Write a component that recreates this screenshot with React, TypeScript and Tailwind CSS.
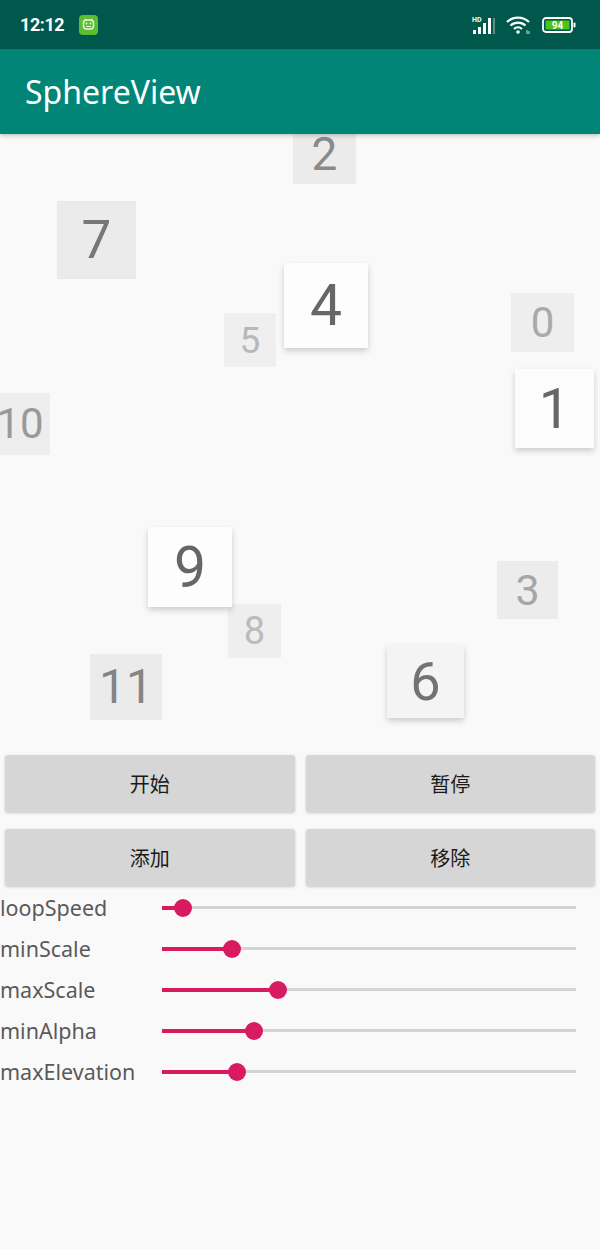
import React from "react";

// Sphere tag data (positions relative to the sphere canvas)
interface Tag {
  n: string;
  x: number;
  y: number;
  w: number;
  h: number;
  fs: number;
  color: string;
  bg: string;
  lifted?: boolean;
}

const tags: Tag[] = [
  { n: "2", x: 293, y: -10, w: 63, h: 60, fs: 46, color: "#8a8a8a", bg: "#ebebeb" },
  { n: "7", x: 57, y: 67, w: 79, h: 78, fs: 53, color: "#777777", bg: "#ebebeb" },
  { n: "5", x: 224, y: 179, w: 52, h: 54, fs: 37, color: "#b8b8b8", bg: "#efefef" },
  { n: "4", x: 284, y: 129, w: 84, h: 85, fs: 57, color: "#666666", bg: "#fdfdfd", lifted: true },
  { n: "0", x: 511, y: 159, w: 63, h: 59, fs: 42, color: "#a9a9a9", bg: "#eeeeee" },
  { n: "1", x: 515, y: 235, w: 79, h: 79, fs: 56, color: "#666666", bg: "#fcfcfc", lifted: true },
  { n: "10", x: -10, y: 259, w: 60, h: 62, fs: 42, color: "#999999", bg: "#ededed" },
  { n: "8", x: 228, y: 470, w: 53, h: 54, fs: 38, color: "#bbbbbb", bg: "#eeeeee" },
  { n: "9", x: 148, y: 393, w: 84, h: 80, fs: 57, color: "#666666", bg: "#fdfdfd", lifted: true },
  { n: "3", x: 497, y: 427, w: 61, h: 58, fs: 43, color: "#a6a6a6", bg: "#ececec" },
  { n: "11", x: 90, y: 520, w: 72, h: 66, fs: 48, color: "#858585", bg: "#ebebeb" },
  { n: "6", x: 387, y: 511, w: 77, h: 73, fs: 54, color: "#737373", bg: "#f4f4f4", lifted: true },
];

// slider rows: thumb center x measured from the track start (track is 414px wide)
const sliders = [
  { name: "loopSpeed", pos: 21 },
  { name: "minScale", pos: 70 },
  { name: "maxScale", pos: 116 },
  { name: "minAlpha", pos: 92 },
  { name: "maxElevation", pos: 75 },
];

const buttons = ["开始", "暂停", "添加", "移除"];

const StatusBar = () => (
  <div className="h-[49px] bg-[#00574b] flex items-center justify-between pl-[20px] pr-[24px]">
    <div className="flex items-center gap-[15px]">
      <span className="text-white text-[18px] font-bold font-['Roboto',sans-serif] tracking-tight">
        12:12
      </span>
      <svg width="19" height="20" viewBox="0 0 19 20">
        <rect x="0" y="0" width="19" height="20" rx="4" fill="#5cbd33" />
        <rect x="4.5" y="5" width="10" height="9" rx="3" fill="none" stroke="#e8f7dd" strokeWidth="1.4" />
        <circle cx="7.5" cy="8.5" r="0.9" fill="#e8f7dd" />
        <circle cx="11.5" cy="8.5" r="0.9" fill="#e8f7dd" />
        <path d="M7 11.5 H12" stroke="#e8f7dd" strokeWidth="1" />
        <path d="M6 3.5 L7 5 M13 3.5 L12 5" stroke="#e8f7dd" strokeWidth="1" />
      </svg>
    </div>
    <div className="flex items-center gap-[10px]">
      {/* HD signal */}
      <svg width="24" height="20" viewBox="0 0 24 20">
        <text x="0" y="7" fontSize="7" fontWeight="bold" fill="#ffffff" fontFamily="Roboto, sans-serif">
          HD
        </text>
        <rect x="1" y="15" width="3" height="4" fill="#ffffff" />
        <rect x="6" y="12" width="3" height="7" fill="#ffffff" />
        <rect x="11" y="8" width="3" height="11" fill="#ffffff" />
        <rect x="16" y="3" width="3" height="16" fill="#ffffff" />
        <rect x="21" y="3" width="2" height="16" fill="#5e8f88" />
      </svg>
      {/* wifi */}
      <svg width="26" height="20" viewBox="0 0 26 20">
        <path d="M1 7 A16 16 0 0 1 23 7" fill="none" stroke="#ffffff" strokeWidth="2.2" />
        <path d="M4.5 10.5 A11 11 0 0 1 19.5 10.5" fill="none" stroke="#ffffff" strokeWidth="2.2" />
        <path d="M8 14 A6 6 0 0 1 16 14" fill="none" stroke="#ffffff" strokeWidth="2.2" />
        <circle cx="12" cy="17" r="1.8" fill="#ffffff" />
        <path d="M21 15 v4 M23 16 v3" stroke="#cfe3df" strokeWidth="1" />
      </svg>
      {/* battery */}
      <svg width="34" height="18" viewBox="0 0 34 18">
        <rect x="1" y="2" width="29" height="14" rx="3" fill="none" stroke="#ffffff" strokeWidth="1.8" />
        <rect x="3.5" y="4.5" width="24" height="9" rx="1" fill="#4cc21a" />
        <rect x="31.5" y="6.5" width="2" height="5" rx="1" fill="#ffffff" />
        <text x="15.5" y="12.5" textAnchor="middle" fontSize="10" fontWeight="bold" fill="#ffffff" fontFamily="Roboto, sans-serif">
          94
        </text>
      </svg>
    </div>
  </div>
);

const SphereTag = ({ tag }: { tag: Tag }) => (
  <div
    className={`absolute flex items-center justify-center font-['Roboto',sans-serif] leading-none ${
      tag.lifted ? "shadow-[0_3px_6px_rgba(0,0,0,0.18)]" : ""
    }`}
    style={{
      left: tag.x,
      top: tag.y,
      width: tag.w,
      height: tag.h,
      fontSize: tag.fs,
      color: tag.color,
      background: tag.bg,
    }}
  >
    {tag.n}
  </div>
);

const Slider = ({ name, pos }: { name: string; pos: number }) => (
  <div className="h-[41px] flex items-center">
    <span className="w-[162px] text-[21.5px] text-[#5a5a5a] font-['Noto_Sans',sans-serif] leading-none">
      {name}
    </span>
    <div className="relative w-[414px] h-[18px] flex items-center">
      <div className="w-full h-[3px] bg-[#d4d4d4]" />
      <div className="absolute left-0 h-[4px] bg-[#d81b60]" style={{ width: pos }} />
      <div
        className="absolute w-[18px] h-[18px] rounded-full bg-[#d81b60]"
        style={{ left: pos - 9 }}
      />
    </div>
  </div>
);

export default function App() {
  return (
    <div className="w-[600px] min-h-[1249px] bg-[#faf9fa]">
      <StatusBar />
      <div className="h-[85px] bg-[#008577] flex items-center pl-[25px] shadow-[0_2px_4px_rgba(0,0,0,0.2)] relative z-10">
        <h1 className="text-white text-[32px] font-['Noto_Sans',sans-serif] leading-none">SphereView</h1>
      </div>
      <div className="relative h-[621px] overflow-hidden">
        {tags.map((t) => (
          <SphereTag tag={t} key={t.n} />
        ))}
      </div>
      <div className="grid grid-cols-2 gap-x-[11px] gap-y-[17px] px-[5px]">
        {buttons.map((b) => (
          <button
            key={b}
            className="h-[57px] rounded-[3px] bg-[#d6d6d6] shadow-[0_1px_3px_rgba(0,0,0,0.2)] text-[20px] text-[#1a1a1a] font-['Noto_Sans_CJK_SC',sans-serif]"
          >
            {b}
          </button>
        ))}
      </div>
      <div className="mt-[1px]">
        {sliders.map((s) => (
          <Slider key={s.name} name={s.name} pos={s.pos} />
        ))}
      </div>
    </div>
  );
}
